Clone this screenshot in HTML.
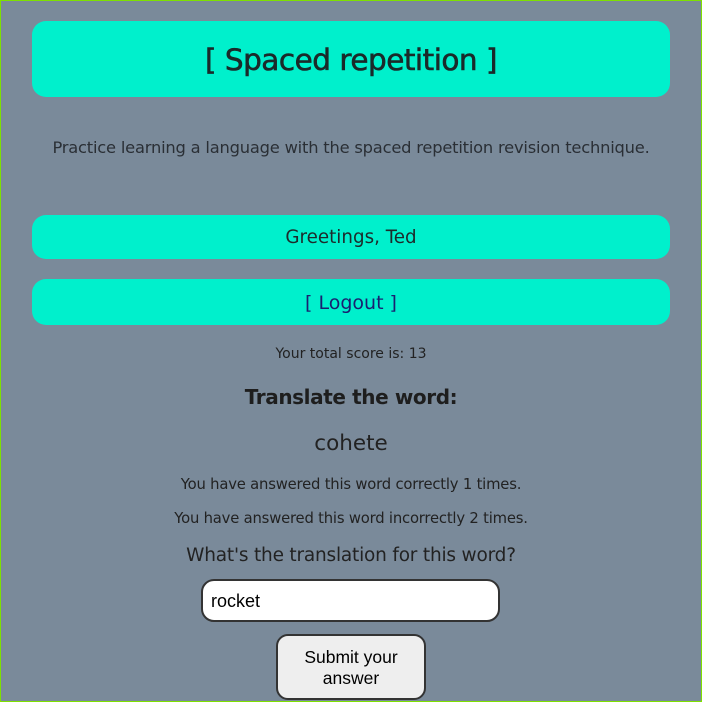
<!DOCTYPE html>
<html><head><meta charset="utf-8"><style>
html,body{margin:0;padding:0}
body{width:702px;height:702px;position:relative;overflow:hidden;background:#7a8a9a;font-family:"DejaVu Sans",sans-serif;color:#222}
.frame{position:absolute;left:0;top:0;width:700px;height:700px;border:1px solid #7ee000}
.box{position:absolute;left:32px;width:638px;background:#00f0cc;border-radius:14px;text-align:center}
.c{position:absolute;left:0;width:702px;text-align:center;white-space:nowrap}
</style></head><body>
<div class="frame"></div>
<div class="box" style="top:21px;height:76px;line-height:78px;font-size:29.5px;color:#1a2a2a;letter-spacing:-0.5px;-webkit-text-stroke:0.6px #1a2a2a">[ Spaced repetition ]</div>
<div class="c" style="top:138px;font-size:16.3px;color:#2a2f35;letter-spacing:-0.2px">Practice learning a language with the spaced repetition revision technique.</div>
<div class="box" style="top:215px;height:44px;line-height:45px;font-size:18.3px;color:#1d2b2b">Greetings, Ted</div>
<div class="box" style="top:279px;height:46px;line-height:48px;font-size:19px;color:#1a2070">[ Logout ]</div>
<div class="c" style="top:346px;font-size:14px;color:#222">Your total score is: 13</div>
<div class="c" style="top:385px;font-size:20px;font-weight:bold;color:#1e1e1e;letter-spacing:-0.4px">Translate the word:</div>
<div class="c" style="top:431px;font-size:21.5px;color:#222">cohete</div>
<div class="c" style="top:476px;font-size:14.8px;color:#222;letter-spacing:-0.2px">You have answered this word correctly 1 times.</div>
<div class="c" style="top:510px;font-size:14.8px;color:#222;letter-spacing:-0.2px">You have answered this word incorrectly 2 times.</div>
<div class="c" style="top:545px;font-size:18.5px;color:#222;letter-spacing:-0.2px">What's the translation for this word?</div>
<div style="position:absolute;left:201px;top:579px;height:39px;background:#fff;border:2px solid #333;border-radius:13px;font-family:'Liberation Sans',sans-serif;font-size:18px;line-height:40px;padding-left:8px;width:287px;color:#000">rocket</div>
<div style="position:absolute;left:276px;top:634px;width:146px;height:61px;background:#eee;border:2px solid #333;border-radius:12px;font-family:'Liberation Sans',sans-serif;font-size:17.5px;line-height:21px;text-align:center;display:flex;align-items:center;justify-content:center;color:#000;padding-top:1px;box-sizing:content-box">Submit your<br>answer</div>
</body></html>
